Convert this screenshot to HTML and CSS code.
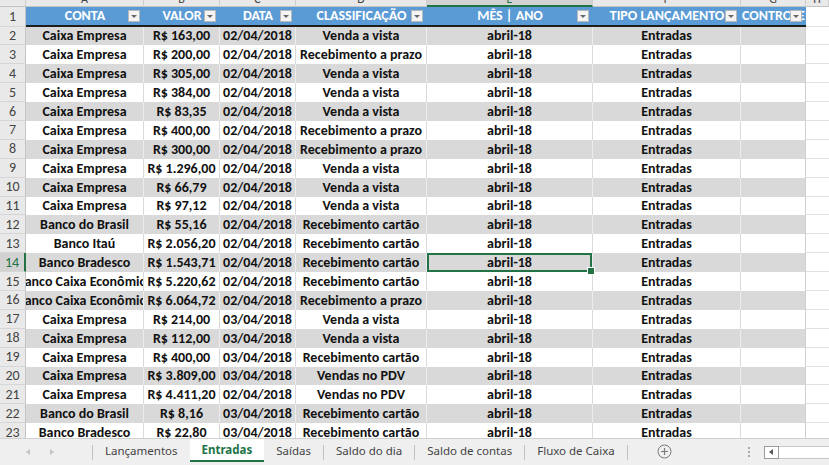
FILE: index.html
```html
<!DOCTYPE html>
<html lang="pt-BR">
<head>
  <meta charset="UTF-8" />
  <title>Entradas</title>
  <link rel="stylesheet" href="styles.css">
</head>
<body>
  <div class="workbook">
    <div class="sheet" id="sheet">
      <div class="colhead corner"></div>
      <div class="colhead"><span>A</span></div>
      <div class="colhead"><span>B</span></div>
      <div class="colhead"><span>C</span></div>
      <div class="colhead"><span>D</span></div>
      <div class="colhead sel"><span>E</span></div>
      <div class="colhead"><span>F</span></div>
      <div class="colhead"><span>G</span></div>
      <div class="colhead"><span>H</span></div>

      <div class="rowhead">1</div>
      <div class="th"><span>CONTA</span><i class="filter"></i></div>
      <div class="th"><span>VALOR</span><i class="filter"></i></div>
      <div class="th"><span>DATA</span><i class="filter"></i></div>
      <div class="th"><span>CLASSIFICAÇÃO</span><i class="filter"></i></div>
      <div class="th"><span>MÊS | ANO</span><i class="filter"></i></div>
      <div class="th"><span>TIPO LANÇAMENTO</span><i class="filter"></i></div>
      <div class="th"><span>CONTROLE</span><i class="filter"></i></div>
      <div class="cell blank"></div>
    </div>

    <div class="tabbar">
      <div class="nav">
        <i class="arrow left"></i>
        <i class="arrow right"></i>
      </div>
      <span class="sep"></span>
      <div class="tab">Lançamentos</div>
      <div class="tab active">Entradas</div>
      <div class="tab">Saídas</div>
      <span class="sep"></span>
      <div class="tab">Saldo do dia</div>
      <span class="sep"></span>
      <div class="tab">Saldo de contas</div>
      <span class="sep"></span>
      <div class="tab">Fluxo de Caixa</div>
      <span class="sep"></span>
      <div class="add">
        <svg width="15" height="15" viewBox="0 0 15 15">
          <circle cx="7.5" cy="7.5" r="6.5" fill="none" stroke="#7a7a7a" stroke-width="1"/>
          <path d="M7.5 4v7M4 7.5h7" stroke="#7a7a7a" stroke-width="1.2"/>
        </svg>
      </div>
      <div class="dots"><i></i><i></i><i></i></div>
      <div class="hscroll">
        <div class="hbtn"><i class="arrow left dark"></i></div>
        <div class="track"></div>
      </div>
    </div>
  </div>

  <script>
    const rows = [
      ['Caixa Empresa', 'R$ 163,00', '02/04/2018', 'Venda a vista'],
      ['Caixa Empresa', 'R$ 200,00', '02/04/2018', 'Recebimento a prazo'],
      ['Caixa Empresa', 'R$ 305,00', '02/04/2018', 'Venda a vista'],
      ['Caixa Empresa', 'R$ 384,00', '02/04/2018', 'Venda a vista'],
      ['Caixa Empresa', 'R$ 83,35', '02/04/2018', 'Venda a vista'],
      ['Caixa Empresa', 'R$ 400,00', '02/04/2018', 'Recebimento a prazo'],
      ['Caixa Empresa', 'R$ 300,00', '02/04/2018', 'Recebimento a prazo'],
      ['Caixa Empresa', 'R$ 1.296,00', '02/04/2018', 'Venda a vista'],
      ['Caixa Empresa', 'R$ 66,79', '02/04/2018', 'Venda a vista'],
      ['Caixa Empresa', 'R$ 97,12', '02/04/2018', 'Venda a vista'],
      ['Banco do Brasil', 'R$ 55,16', '02/04/2018', 'Recebimento cartão'],
      ['Banco Itaú', 'R$ 2.056,20', '02/04/2018', 'Recebimento cartão'],
      ['Banco Bradesco', 'R$ 1.543,71', '02/04/2018', 'Recebimento cartão'],
      ['Banco Caixa Econômica', 'R$ 5.220,62', '02/04/2018', 'Recebimento cartão'],
      ['Banco Caixa Econômica', 'R$ 6.064,72', '02/04/2018', 'Recebimento a prazo'],
      ['Caixa Empresa', 'R$ 214,00', '03/04/2018', 'Venda a vista'],
      ['Caixa Empresa', 'R$ 112,00', '03/04/2018', 'Venda a vista'],
      ['Caixa Empresa', 'R$ 400,00', '03/04/2018', 'Recebimento cartão'],
      ['Caixa Empresa', 'R$ 3.809,00', '03/04/2018', 'Vendas no PDV'],
      ['Caixa Empresa', 'R$ 4.411,20', '02/04/2018', 'Vendas no PDV'],
      ['Banco do Brasil', 'R$ 8,16', '03/04/2018', 'Recebimento cartão'],
      ['Banco Bradesco', 'R$ 22,80', '03/04/2018', 'Recebimento cartão']
    ];

    // active cell: E14
    const activeRow = 14;
    const activeCol = 4;
    const sheet = document.getElementById('sheet');

    function addCell(cls, text) {
      const div = document.createElement('div');
      div.className = cls;
      if (text !== '') {
        const span = document.createElement('span');
        span.textContent = text;
        div.appendChild(span);
      }
      sheet.appendChild(div);
    }

    rows.forEach((r, i) => {
      const n = i + 2;
      const band = n % 2 === 0 ? ' grey' : '';
      addCell('rowhead' + (n === activeRow ? ' active' : ''), String(n));
      [...r, 'abril-18', 'Entradas', ''].forEach((val, c) => {
        let cls = 'cell' + band;
        if (c === 6) cls += ' last';
        if (n === activeRow && c === activeCol) cls += ' active';
        addCell(cls, val);
      });
      addCell('cell blank', '');
    });
  </script>
</body>
</html>
```

FILE: styles.css
```css
* {
  box-sizing: border-box;
}

body {
  margin: 0;
  background-color: #fff;
  font-family: Carlito, 'Liberation Sans', Arial, sans-serif;
  overflow: hidden;
}

.workbook {
  width: 829px;
  height: 465px;
  display: flex;
  flex-direction: column;
}

/* grid */

.sheet {
  flex: 1;
  overflow: hidden;
  display: grid;
  grid-template-columns: 26px 118px 76px 76px 131px 166px 148px 65px 1fr;
  grid-template-rows: 7px 19.5px;
  grid-auto-rows: 18.9px;
  align-content: start;
}

.colhead {
  background-color: #e9e9e9;
  border-right: 1px solid #cfcfcf;
  border-bottom: 1px solid #c4c4c4;
  overflow: hidden;
  text-align: center;
  font-size: 12px;
  color: #444;
}

.colhead span {
  display: block;
  line-height: 14px;
  margin-top: -8px;
}

.colhead.sel {
  background-color: #d2d2d2;
  border-bottom: 2px solid #217346;
  color: #217346;
}

.rowhead {
  display: flex;
  align-items: center;
  justify-content: center;
  background-color: #e9e9e9;
  border-right: 1px solid #c4c4c4;
  border-bottom: 1px solid #d6d6d6;
  font-size: 14px;
  color: #444;
}

.rowhead.active {
  background-color: #d2d2d2;
  color: #217346;
  border-right: 2px solid #217346;
}

.th {
  position: relative;
  display: flex;
  align-items: center;
  justify-content: center;
  white-space: nowrap;
  overflow: hidden;
  background-color: #5b9bd5;
  color: #fff;
  font-weight: bold;
  font-size: 14px;
  border-bottom: 2px solid #1e1e1e;
}

.filter {
  position: absolute;
  right: 4px;
  top: 3px;
  width: 12px;
  height: 12px;
  background-color: #f4f4f4;
  border: 1px solid #b8b8b8;
}

.filter::after {
  content: "";
  position: absolute;
  left: 2px;
  top: 4px;
  border-left: 3px solid transparent;
  border-right: 3px solid transparent;
  border-top: 3px solid #666;
}

.cell {
  position: relative;
  display: flex;
  align-items: center;
  justify-content: center;
  white-space: nowrap;
  overflow: hidden;
  font-weight: bold;
  font-size: 14px;
  color: #111;
  background-color: #fff;
  border-right: 1px solid #dadada;
}

.cell.grey {
  background-color: #d9d9d9;
  border-right-color: #ececec;
}

.cell.last {
  border-right-color: #cfcfcf;
}

.cell.blank {
  background-color: #fff;
  border-right: none;
  border-bottom: 1px solid #e2e2e2;
}

.cell.active {
  overflow: visible;
  box-shadow: inset 0 0 0 2px #217346;
}

.cell.active::after {
  content: "";
  position: absolute;
  right: -3px;
  bottom: -3px;
  width: 6px;
  height: 6px;
  background-color: #217346;
  border: 1px solid #fff;
  z-index: 2;
}

/* sheet tabs */

.tabbar {
  height: 27px;
  display: flex;
  align-items: center;
  background-color: #efefef;
  border-top: 1px solid #d0d0d0;
  font-family: 'Noto Sans', 'Open Sans', sans-serif;
  font-size: 11.5px;
  color: #444;
}

.nav {
  width: 92px;
  display: flex;
  align-items: center;
  gap: 20px;
  padding-left: 26px;
}

.arrow {
  display: block;
  width: 0;
  height: 0;
  border-top: 3px solid transparent;
  border-bottom: 3px solid transparent;
}

.arrow.left {
  border-right: 4px solid #c4c4c4;
}

.arrow.right {
  border-left: 4px solid #c4c4c4;
}

.arrow.left.dark {
  border-right-color: #555;
}

.sep {
  width: 1px;
  height: 15px;
  background-color: #c2c2c2;
}

.tab {
  height: 100%;
  display: flex;
  align-items: center;
  padding: 0 12px 3px;
  white-space: nowrap;
}

.tab.active {
  height: 23px;
  align-self: flex-start;
  padding-bottom: 0;
  background-color: #fff;
  color: #217346;
  font-weight: bold;
  border-bottom: 2px solid #217346;
}

.add {
  display: flex;
  margin-left: 29px;
  margin-bottom: 2px;
}

.dots {
  display: flex;
  flex-direction: column;
  gap: 2px;
  margin-left: 76px;
}

.dots i {
  display: block;
  width: 2px;
  height: 2px;
  background-color: #aaa;
}

.hscroll {
  display: flex;
  flex: 1;
  height: 13px;
  margin-left: 14px;
}

.hbtn {
  width: 15px;
  display: flex;
  align-items: center;
  justify-content: center;
  background-color: #fff;
  border: 1px solid #9a9a9a;
}

.track {
  flex: 1;
  background-color: #fff;
  border-top: 1px solid #c8c8c8;
  border-bottom: 1px solid #c8c8c8;
}
```
